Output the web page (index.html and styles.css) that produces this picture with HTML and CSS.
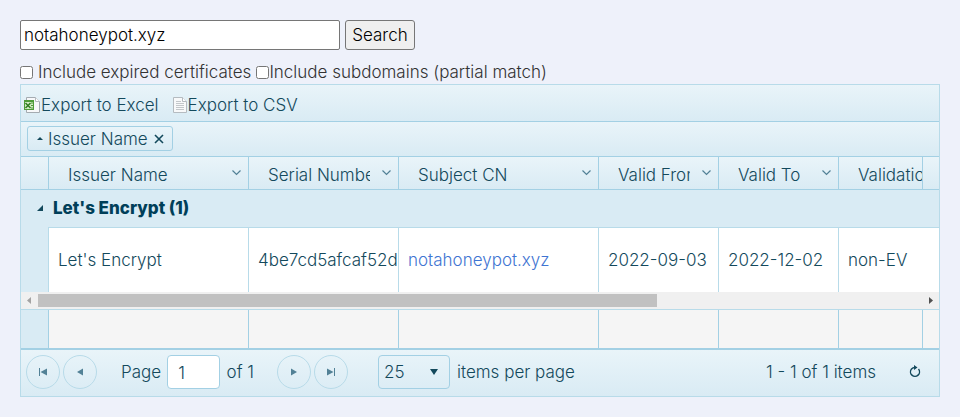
FILE: index.html
```html
<!DOCTYPE html>
<html lang="en">
<head>
<meta charset="utf-8">
<title>Certificate search</title>
<link rel="stylesheet" href="styles.css">
</head>
<body>
<form class="search">
  <div class="search-row">
    <input class="search-text" type="text" value="notahoneypot.xyz" aria-label="Domain">
    <button class="search-button" type="button">Search</button>
  </div>
  <div class="options">
    <input id="expired" class="check" type="checkbox"><label class="expired-label" for="expired">Include expired certificates</label>
    <input id="subdomains" class="check" type="checkbox"><label for="subdomains">Include subdomains (partial match)</label>
  </div>
</form>

<section class="grid">
  <div class="toolbar">
    <a class="export" href="#">
      <svg width="16" height="16" viewBox="0 0 16 16"><path d="M2.500.5h9l4 4v11h-13z" fill="#f7f8fa" stroke="#a4abb1"/><path d="M11.500.5v4h4" fill="#fff" stroke="#b5bbc0"/><path d="M0 3h10v10H0z" fill="#4d9b38"/><path d="M1 5h8v7H1z" fill="#d3ebc4"/><path d="M1.500 6l5 5M6.500 6l-5 5" stroke="#2f7d20" stroke-width="1.500"/><path d="M7 6h2M7 8.500h2M7 11h2" stroke="#4d9b38"/></svg><span>Export to Excel</span>
    </a>
    <a class="export" href="#">
      <svg width="14" height="16" viewBox="0 0 14 16"><path d="M.5.5h9l4 4v11H.5z" fill="#f8f9fa" stroke="#b5bbc0"/><path d="M9.500.5v4h4" fill="#fff" stroke="#b5bbc0"/><path d="M3 4.500h5M3 6.500h8M3 8.500h8M3 10.500h8M3 12.500h8" stroke="#c3c7ca"/></svg><span>Export to CSV</span>
    </a>
  </div>

  <div class="grouping">
    <div class="chip">
      <svg width="6" height="3" viewBox="0 0 6 3"><path d="M3 0l3 3H0z" fill="#13495c"/></svg>
      <a class="chip-name" href="#">Issuer Name</a>
      <button class="plain" type="button" aria-label="Remove grouping"><svg width="10" height="10" viewBox="0 0 10 10"><path d="M1 1l8 8M9 1L1 9" stroke="#13495c" stroke-width="1.600"/></svg></button>
    </div>
  </div>

  <div class="head">
    <div class="head-wrap">
      <table class="table">
        <colgroup><col class="c-tree"><col class="c-wide"><col class="c-mid"><col class="c-wide"><col class="c-date"><col class="c-date"><col></colgroup>
        <thead><tr>
          <th class="tree"></th>
          <th><div class="th"><span>Issuer Name</span><svg width="9" height="6" viewBox="0 0 9 6"><path class="chevron" d="M.5.5l4 4 4-4"/></svg></div></th>
          <th><div class="th"><span>Serial Number</span><svg width="9" height="6" viewBox="0 0 9 6"><path class="chevron" d="M.5.5l4 4 4-4"/></svg></div></th>
          <th><div class="th"><span>Subject CN</span><svg width="9" height="6" viewBox="0 0 9 6"><path class="chevron" d="M.5.5l4 4 4-4"/></svg></div></th>
          <th><div class="th"><span>Valid From</span><svg width="9" height="6" viewBox="0 0 9 6"><path class="chevron" d="M.5.5l4 4 4-4"/></svg></div></th>
          <th><div class="th"><span>Valid To</span><svg width="9" height="6" viewBox="0 0 9 6"><path class="chevron" d="M.5.5l4 4 4-4"/></svg></div></th>
          <th><div class="th"><span>Validation</span></div></th>
        </tr></thead>
      </table>
    </div>
  </div>

  <div class="content">
    <table class="table">
      <colgroup><col class="c-tree"><col class="c-wide"><col class="c-mid"><col class="c-wide"><col class="c-date"><col class="c-date"><col></colgroup>
      <tbody>
        <tr class="group"><td colspan="7"><div class="group-title"><svg width="6" height="6" viewBox="0 0 6 6"><path d="M6 0v6H0z" fill="#13495c"/></svg><span>Let's Encrypt (1)</span></div></td></tr>
        <tr class="row">
          <td class="tree"></td>
          <td>Let's Encrypt</td>
          <td>4be7cd5afcaf52d</td>
          <td><a class="link" href="#">notahoneypot.xyz</a></td>
          <td>2022-09-03</td>
          <td>2022-12-02</td>
          <td>non-EV</td>
        </tr>
      </tbody>
    </table>
  </div>
  <div class="scrollbar">
    <svg class="arrow" width="17" height="17" viewBox="0 0 17 17"><path d="M10 5v7L6 8.500z" fill="#a3a3a3"/></svg>
    <div class="track"><div class="thumb"></div></div>
    <svg class="arrow" width="17" height="17" viewBox="0 0 17 17"><path d="M7 5v7l4-3.500z" fill="#505050"/></svg>
  </div>

  <div class="foot">
    <div class="foot-wrap">
      <table class="table">
        <colgroup><col class="c-tree"><col class="c-wide"><col class="c-mid"><col class="c-wide"><col class="c-date"><col class="c-date"><col></colgroup>
        <tbody><tr><td class="tree"></td><td></td><td></td><td></td><td></td><td></td><td></td></tr></tbody>
      </table>
    </div>
  </div>

  <div class="pager">
    <div class="pair">
      <button class="round" type="button" aria-label="First page"><svg width="8" height="8" viewBox="0 0 8 8"><path d="M0 0h1v8H0zM8 .5v7L1.500 4z"/></svg></button>
      <button class="round" type="button" aria-label="Previous page"><svg width="8" height="8" viewBox="0 0 8 8"><path d="M7 .5v7L1 4z"/></svg></button>
    </div>
    <div class="page">
      <label for="page">Page</label>
      <input id="page" class="page-input" type="text" value="1">
      <span>of 1</span>
    </div>
    <div class="pair">
      <button class="round" type="button" aria-label="Next page"><svg width="8" height="8" viewBox="0 0 8 8"><path d="M1 .5v7L7 4z"/></svg></button>
      <button class="round" type="button" aria-label="Last page"><svg width="8" height="8" viewBox="0 0 8 8"><path d="M7 0h1v8H7zM0 .5v7L6.500 4z"/></svg></button>
    </div>
    <div class="sizes">
      <div class="size-box">
        <select id="size" class="size"><option>25</option></select>
        <svg class="size-arrow" width="8" height="6" viewBox="0 0 8 6"><path d="M0 0h8L4 6z" fill="#13495c"/></svg>
      </div>
      <label for="size">items per page</label>
    </div>
    <span class="info">1 - 1 of 1 items</span>
    <button class="plain" type="button" aria-label="Refresh"><svg width="12" height="14" viewBox="0 0 12 14"><path d="M9.500 4A4.500 4.500 0 1 1 2.500 4Q3.800 2.600 6 2.500" fill="none" stroke="#13495c" stroke-width="1.400"/><path d="M5 0v5L8.500 2.500z" fill="#13495c"/></svg></button>
  </div>
</section>
</body>
</html>
```

FILE: styles.css
```css
* { box-sizing: border-box; }
body {
  margin: 20px;
  background: #eef1fa;
  color: #333;
  font: 300 17px/20px Inter, "Liberation Sans", sans-serif;
}
input, button, select { font: inherit; margin: 0; }
a { color: inherit; text-decoration: none; }
svg { display: block; flex: none; }

.search-row { display: flex; gap: 5px; }
.search-text {
  width: 320px;
  height: 30px;
  padding: 1px 3px;
  border: 1px solid #767676;
  border-radius: 2px;
  background: #fff;
  color: #000;
}
.search-button {
  width: 70px;
  height: 30px;
  padding: 0;
  border: 1px solid #767676;
  border-radius: 3px;
  background: #efefef;
  color: #000;
}
.options { display: flex; align-items: center; height: 20px; margin: 12px 0 2px; }
.check { width: 13px; height: 13px; }
.expired-label { margin: 0 5px; }

.grid { border: 1px solid #b8dbe9; background: #d9ebf4; color: #13495c; }
.toolbar, .grouping, .head, .pager, .chip { background: linear-gradient(#e9f4f9, #d9ebf4); }
.toolbar {
  display: flex;
  align-items: center;
  gap: 14px;
  height: 37px;
  padding: 3px 3px 0;
  border-bottom: 1px solid #a3d0e4;
}
.export { display: flex; align-items: center; gap: 1px; }
.grouping { display: flex; align-items: flex-start; height: 35px; padding: 4px 6px; border-bottom: 1px solid #a3d0e4; }
.chip {
  display: flex;
  align-items: center;
  gap: 5px;
  height: 25px;
  min-width: 146px;
  padding: 0 8px 0 9px;
  border: 1px solid #a3d0e4;
  border-radius: 3px;
}
.chip-name { flex: 1; }
.plain { padding: 0; border: 0; background: none; }

.table { width: 1311px; table-layout: fixed; border-collapse: separate; border-spacing: 0; }
.c-tree { width: 27px; }
.c-wide { width: 200px; }
.c-mid { width: 150px; }
.c-date { width: 120px; }
th, td { padding: 0; border-left: 1px solid #a3d0e4; font-weight: inherit; text-align: left; }
.tree, .group td { border-left: 0; }

.head { padding-right: 16px; border-bottom: 1px solid #a3d0e4; }
.head-wrap, .foot-wrap { overflow: hidden; border-right: 1px solid #a3d0e4; }
.head th { height: 32px; }
.th { display: flex; align-items: center; gap: 12px; padding: 3px 7px 0 19px; }
.th span { flex: 1; min-width: 0; overflow: hidden; white-space: nowrap; }
.th svg { margin-bottom: 4px; }
.chevron { fill: none; stroke: #528196; stroke-width: 1.2; }

.content { overflow: hidden; }
.group td { height: 37px; padding-bottom: 2px; }
.group-title { display: flex; align-items: center; gap: 10px; padding-left: 16px; font-weight: 800; color: #003f59; }
.row td { height: 65px; padding: 0 0 1px 9px; overflow: hidden; white-space: nowrap; background: #fff; border-top: 1px solid #b8dbe9; border-left-color: #b8dbe9; }
.row .tree { padding: 0; border-top: 0; background: #d9ebf4; }
.link { color: #3f75d2; }

.scrollbar { display: flex; height: 17px; background: #f0f0f0; }
.track { flex: 1; padding: 2px 0; }
.thumb { width: 70%; height: 13px; background: #c1c1c1; }

.foot { padding-right: 16px; border-top: 1px solid #b8dbe9; border-bottom: 2px solid #a3d0e4; background: #f5f5f5; }
.foot td { height: 38px; }
.foot .tree { background: #d9ebf4; }

.pager { display: flex; align-items: center; height: 46px; padding: 0 18px 2px 5px; }
.pair { display: flex; gap: 3px; }
.round {
  display: grid;
  place-items: center;
  width: 34px;
  height: 34px;
  padding: 0;
  border: 1px solid #b8dbe9;
  border-radius: 50%;
  background: none;
}
.round svg { fill: #528196; }
.page { display: flex; align-items: center; justify-content: space-between; width: 133px; margin: 0 23px 0 24px; }
.page-input {
  width: 53px;
  height: 34px;
  padding: 2px 10px 0;
  border: 1px solid #a3d0e4;
  border-radius: 4px;
  background: #fff;
  color: #13495c;
}
.sizes { display: flex; align-items: center; gap: 7px; margin-left: 30px; }
.size-box { position: relative; }
.size {
  appearance: none;
  width: 72px;
  height: 34px;
  padding: 0 5px;
  border: 1px solid #a3d0e4;
  border-radius: 4px;
  background: transparent;
  color: #13495c;
}
.size-arrow { position: absolute; right: 12px; top: 14px; pointer-events: none; }
.info { margin: 0 33px 0 auto; }
```
